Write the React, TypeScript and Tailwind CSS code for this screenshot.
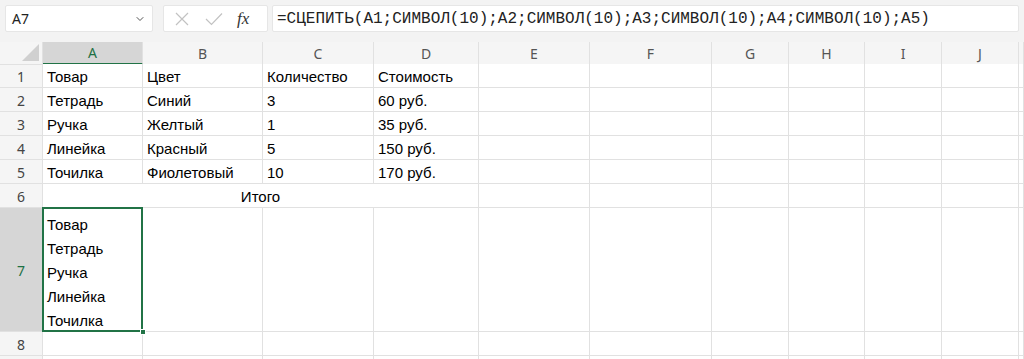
import { ChevronDown } from "lucide-react";

const cols = "grid grid-cols-[43px_100px_120px_111px_105px_111px_122px_77px_76px_77px_77px_1fr]";
const letters = ["A", "B", "C", "D", "E", "F", "G", "H", "I", "J", ""];

const rows: string[][] = [
  ["Товар", "Цвет", "Количество", "Стоимость"],
  ["Тетрадь", "Синий", "3", "60 руб."],
  ["Ручка", "Желтый", "1", "35 руб."],
  ["Линейка", "Красный", "5", "150 руб."],
  ["Точилка", "Фиолетовый", "10", "170 руб."],
];

const cellFont = "font-['Liberation_Sans',sans-serif] text-[15px] text-black";
const headFont = "font-['Noto_Sans',sans-serif] text-[14px]";

function RowHead({ n, active, h }: { n?: number; active?: boolean; h: string }) {
  return (
    <div
      className={`${h} flex items-center justify-center border-r border-b border-[#e1e1e1] pt-[1px] ${headFont} ${
        active ? "bg-[#d6d6d6] text-[#1e7145]" : "bg-[#f5f5f5] text-[#444]"
      }`}
    >
      {n}
    </div>
  );
}

function Cell({ text }: { text?: string }) {
  return (
    <div className={`h-6 border-r border-b border-[#e1e1e1] bg-white pl-[4px] pt-[4px] flex items-center whitespace-nowrap ${cellFont}`}>
      {text}
    </div>
  );
}

export default function App() {
  return (
    <div className="w-[1024px] h-[359px] overflow-hidden bg-[#f3f3f3]">
      {/* formula bar */}
      <div className="flex h-[42px] items-start gap-[10px] px-[5px] pt-[5px]">
        <div className="flex h-[27px] w-[148px] items-center justify-between rounded-[2px] border border-[#e6e6e6] bg-white pl-[6px] pr-[6px]">
          <span className={`${headFont} text-[#222]`}>A7</span>
          <ChevronDown size={12} strokeWidth={2} className="text-[#555]" />
        </div>
        <div className="flex h-[27px] w-[105px] items-center rounded-[2px] border border-[#e6e6e6] bg-white">
          <svg width="16" height="16" viewBox="0 0 16 16" className="ml-[10px]">
            <path d="M2 2 L14 14 M14 2 L2 14" stroke="#c2c2c2" strokeWidth="1.2" fill="none" />
          </svg>
          <svg width="20" height="16" viewBox="0 0 20 16" className="ml-[14px]">
            <path d="M2 8 L7.5 13.5 L18 2.5" stroke="#c2c2c2" strokeWidth="1.2" fill="none" />
          </svg>
          <span className="ml-[13px] font-['Liberation_Serif',serif] text-[17px] italic text-[#333]">fx</span>
        </div>
        <div className="-ml-[6px] flex h-[27px] w-[747px] items-center rounded-[2px] border border-[#e6e6e6] bg-white pl-[4px]">
          <span className="font-['Liberation_Mono',monospace] text-[16px] text-[#222] whitespace-nowrap">
            =СЦЕПИТЬ(A1;СИМВОЛ(10);A2;СИМВОЛ(10);A3;СИМВОЛ(10);A4;СИМВОЛ(10);A5)
          </span>
        </div>
      </div>

      {/* column headers */}
      <div className={`${cols} h-[22px]`}>
        <div className="relative border-r border-b border-[#e1e1e1] bg-[#f5f5f5]">
          <svg width="17" height="17" viewBox="0 0 17 17" className="absolute right-[3px] bottom-[3px]">
            <path d="M17 0 L17 17 L0 17 Z" fill="#d0d0d0" />
          </svg>
        </div>
        {letters.map((l, i) =>
          i === 0 ? (
            <div
              key={l}
              className={`flex items-center justify-center border-r border-[#e1e1e1] border-b-2 border-b-[#217346] bg-[#d6d6d6] ${headFont} text-[#1e7145]`}
            >
              {l}
            </div>
          ) : (
            <div
              key={i}
              className={`flex items-center justify-center border-r border-b border-[#e1e1e1] bg-[#f5f5f5] ${headFont} text-[#555]`}
            >
              {l}
            </div>
          )
        )}
      </div>

      {/* data rows */}
      {rows.map((r, i) => (
        <div key={i} className={cols}>
          <RowHead n={i + 1} h="h-6" />
          {r.map((t, j) => (
            <Cell key={j} text={t} />
          ))}
          {Array.from({ length: 7 }).map((_, j) => (
            <Cell key={"e" + j} />
          ))}
        </div>
      ))}

      {/* merged row 6 */}
      <div className={cols}>
        <RowHead n={6} h="h-6" />
        <div className={`col-span-4 h-6 border-r border-b border-[#e1e1e1] bg-white pt-[4px] flex items-center justify-center ${cellFont}`}>
          Итого
        </div>
        {Array.from({ length: 7 }).map((_, j) => (
          <Cell key={j} />
        ))}
      </div>

      {/* row 7 */}
      <div className={cols}>
        <RowHead n={7} active h="h-[124px]" />
        <div className={`relative h-[124px] border-r border-b border-[#e1e1e1] bg-white pl-[4px] pt-[5px] leading-6 ${cellFont}`}>
          <div>Товар</div>
          <div>Тетрадь</div>
          <div>Ручка</div>
          <div>Линейка</div>
          <div>Точилка</div>
          <div className="absolute -left-px -top-px right-[-1px] bottom-[-1px] border-2 border-[#217346]" />
          <div className="absolute right-[-4px] bottom-[-4px] h-[6px] w-[6px] border border-white bg-[#217346]" />
        </div>
        {Array.from({ length: 10 }).map((_, j) => (
          <div key={j} className="h-[124px] border-r border-b border-[#e1e1e1] bg-white" />
        ))}
      </div>

      {/* row 8 and the top of row 9 */}
      <div className={cols}>
        <RowHead n={8} h="h-6" />
        {Array.from({ length: 11 }).map((_, j) => (
          <Cell key={j} />
        ))}
      </div>
      <div className={cols}>
        <RowHead h="h-6" />
        {Array.from({ length: 11 }).map((_, j) => (
          <Cell key={j} />
        ))}
      </div>
    </div>
  );
}
